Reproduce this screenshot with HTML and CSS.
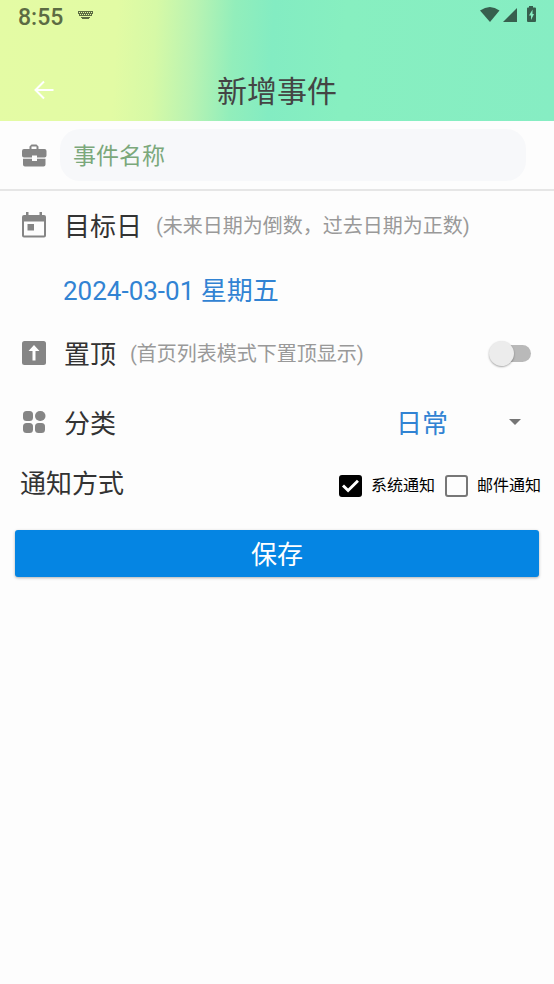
FILE: index.html
```html
<!DOCTYPE html>
<html lang="zh-CN">
<head>
<meta charset="utf-8">
<meta name="viewport" content="width=device-width, initial-scale=1">
<title>新增事件</title>
<link rel="stylesheet" href="styles.css">
</head>
<body>
<header class="header">
  <div class="status">
    <span class="time">8:55</span>
    <svg class="keyboard" width="16" height="9" viewBox="0 0 16 9" fill="currentColor" aria-hidden="true">
      <path d="M0 0h15v1H0zM0 1h1v1H0zM2 1h1v1H2zM4 1h1v1H4zM6 1h1v1H6zM8 1h1v1H8zM10 1h1v1h-1zM12 1h1v1h-1zM14 1h1v1h-1zM0 2h15v1H0zM1 3h1v1H1zM3 3h1v1H3zM5 3h1v1H5zM7 3h1v1H7zM9 3h1v1H9zM11 3h1v1h-1zM13 3h1v1h-1zM1 4h13v1H1zM3 6h9v1H3zM4 7h7v1H4z"/>
    </svg>
    <svg class="signals" width="58" height="18" viewBox="0 0 58 18" fill="currentColor" aria-hidden="true">
      <path d="M0 4.500Q10 -2.500 19.500 4.500L10 16Z"/>
      <path d="M37 2v14H23Z"/>
      <path fill-rule="evenodd" d="M49 0h4v1.500h2a1 1 0 0 1 1 1v12.500a1 1 0 0 1-1 1h-7a1 1 0 0 1-1-1V2.500a1 1 0 0 1 1-1h1ZM52.500 3.500l-3.500 6h2v4.500l3-6h-1.500Z"/>
    </svg>
  </div>
  <div class="toolbar">
    <button class="back" type="button" aria-label="返回">
      <svg width="20" height="20" viewBox="0 0 20 20" fill="none" stroke="#fff" stroke-width="2" aria-hidden="true"><path d="M19.500 10H2M10 1.500L1.500 10l8.500 8.500"/></svg>
    </button>
    <h1 class="title">新增事件</h1>
  </div>
</header>
<form class="form">
  <div class="row name-row">
    <svg class="icon" width="26" height="26" viewBox="0 0 26 26" fill="#858585" aria-hidden="true">
      <path fill-rule="evenodd" d="M8.500 7V4.500L10.500 2.500h5l2 2V7H23.500q2 0 2 2v4.500q0 2-2 2H16v-2h-5v2H3q-2 0-2-2V9q0-2 2-2ZM10.500 7h5V4.500h-5Z"/>
      <path d="M2 16.800h9V19h5v-2.200h8.500V22.500q0 2-2 2H4q-2 0-2-2Z"/>
    </svg>
    <input class="name" type="text" aria-label="事件名称" placeholder="事件名称">
  </div>
  <div class="row target-row">
    <svg class="icon" width="26" height="26" viewBox="0 0 26 26" aria-hidden="true">
      <path fill="#858585" fill-rule="evenodd" d="M5 0h2.500v3h11V0H21v3h2q2 0 2 2v18.500q0 2-2 2H3q-2 0-2-2V5q0-2 2-2h2ZM3 9.500v14h20v-14Z"/>
      <path fill="#858585" d="M6.500 12H13v6.500H6.500z"/>
    </svg>
    <span class="label">目标日</span>
    <span class="hint">(未来日期为倒数，过去日期为正数)</span>
  </div>
  <div class="row date-row">
    <button class="date" type="button">2024-03-01 星期五</button>
  </div>
  <div class="row pin-row">
    <svg class="icon" width="26" height="26" viewBox="0 0 26 26" aria-hidden="true">
      <rect x="1" y="1" width="24" height="24" rx="2.500" fill="#858585"/>
      <path d="M13 5l5.500 6h-4v9.500h-3V11h-4Z" fill="#fff"/>
    </svg>
    <label class="label" for="pin">置顶</label>
    <span class="hint">(首页列表模式下置顶显示)</span>
    <input class="switch" id="pin" type="checkbox" role="switch">
  </div>
  <div class="row category-row">
    <svg class="icon" width="26" height="26" viewBox="0 0 26 26" fill="#858585" aria-hidden="true">
      <rect x="2" y="2" width="10" height="10" rx="3.500"/>
      <rect x="14" y="2" width="10.500" height="10" rx="5"/>
      <rect x="2" y="14" width="10" height="10" rx="3.500"/>
      <rect x="14" y="14" width="10" height="10" rx="3.500"/>
    </svg>
    <label class="label" for="category">分类</label>
    <span class="picker">
      <select class="category" id="category"><option>日常</option></select>
      <svg class="caret" width="12" height="6" viewBox="0 0 12 6" aria-hidden="true"><path d="M0 0h12L6 6Z" fill="#757575"/></svg>
    </span>
  </div>
  <div class="notify" role="group" aria-labelledby="notify-label">
    <span class="label" id="notify-label">通知方式</span>
    <div class="checks">
      <label class="check"><input class="box" type="checkbox" checked>系统通知</label>
      <label class="check"><input class="box" type="checkbox">邮件通知</label>
    </div>
  </div>
  <button class="save" type="submit">保存</button>
</form>
</body>
</html>
```

FILE: styles.css
```css
* { box-sizing: border-box; }

body {
  margin: 0;
  min-height: 100vh;
  background: #fdfdfd;
  color: #333;
  font-family: Roboto, "Noto Sans CJK SC", sans-serif;
}

button, input, select {
  margin: 0;
  border: 0;
  padding: 0;
  background: none;
  color: inherit;
  font: inherit;
}

.header {
  background: linear-gradient(93deg, #e4fba4 0%, #e2fba4 21%, #d6f9a6 28%, #b9f3b2 35%, #92eebb 42%, #83ecc2 49%, #87efc0 62%, #86edc3 100%);
}

.status {
  display: flex;
  align-items: center;
  height: 32px;
  padding: 0 16px 0 18px;
  color: #5c6b43;
}

.time { padding-top: 3px; font-size: 23px; font-weight: 500; line-height: 29px; }
.keyboard { margin: 0 auto 2px 15px; }
.signals { margin-bottom: 2px; color: #375f4e; }

.toolbar {
  display: grid;
  grid-template-columns: 88px 1fr 88px;
  align-items: center;
  padding: 36px 0 9px;
}

.back { display: grid; place-content: center; height: 44px; }
.title {
  margin: 0;
  color: #444;
  font-family: "Noto Sans CJK SC", sans-serif;
  font-size: 30px;
  font-weight: 400;
  line-height: 42px;
  padding-bottom: 2px;
  text-align: center;
}

.row {
  display: flex;
  align-items: center;
  padding: 0 23px 0 21px;
}

.icon { flex: none; }

.name-row {
  gap: 13px;
  height: 70px;
  padding-right: 28px;
  border-bottom: 2px solid #e6e6e6;
}

.name {
  flex: 1;
  min-width: 0;
  height: 52px;
  padding: 0 13px 2px;
  border-radius: 20px;
  background: #f7f8fa;
  font-family: "Noto Sans CJK SC", sans-serif;
  font-size: 23px;
}

.name::placeholder { color: #7ba87b; opacity: 1; }

.target-row { height: 68px; }
.date-row { height: 62px; padding-left: 63px; }
.pin-row { height: 64px; }
.category-row { height: 74px; }

.label {
  font-family: "Noto Sans CJK SC", sans-serif;
  font-size: 26px;
  line-height: 38px;
}

.icon + .label { margin-left: 17px; }
.hint { margin-left: 14px; padding-top: 2px; font-size: 20px; line-height: 28px; color: #999; white-space: nowrap; }
.date { padding-top: 2px; font-size: 26px; line-height: 38px; color: #3183d3; }

.switch {
  appearance: none;
  display: flex;
  align-items: center;
  width: 38px;
  height: 17px;
  margin-left: auto;
  border-radius: 9px;
  background: #b9b9b9;
}

.switch::before {
  content: "";
  width: 25px;
  height: 25px;
  margin-left: -4px;
  border-radius: 50%;
  background: #ececec;
  box-shadow: 0 1px 2px rgba(0, 0, 0, .35);
}

.switch:checked { justify-content: flex-end; background: #8ec5f2; }

.picker {
  display: grid;
  align-items: center;
  width: 135px;
  margin-left: auto;
}

.category, .caret { grid-area: 1 / 1; }
.category {
  appearance: none;
  width: 100%;
  color: #3183d3;
  font-family: "Noto Sans CJK SC", sans-serif;
  font-size: 26px;
  line-height: 38px;
}
.caret { justify-self: end; margin-right: 10px; pointer-events: none; }

.notify {
  display: flex;
  align-items: baseline;
  justify-content: space-between;
  height: 54px;
  padding: 4px 13px 0 20px;
}

.checks { display: flex; gap: 10px; }
.check { display: flex; align-items: center; gap: 9px; font-size: 16px; line-height: 24px; color: #000; }

.box {
  appearance: none;
  display: grid;
  place-content: center;
  width: 23px;
  height: 22px;
  border: 2px solid #777;
  border-radius: 3px;
}

.box:checked { border-color: #000; background: #000; }

.box:checked::before {
  content: "";
  width: 17px;
  height: 14px;
  background: #fff;
  clip-path: polygon(0 53%, 12% 40%, 36% 67%, 88% 6%, 100% 20%, 36% 96%);
}

.save {
  display: block;
  width: calc(100% - 30px);
  height: 47px;
  margin: 17px 15px 0;
  padding-top: 2px;
  border-radius: 3px;
  background: #0585e3;
  box-shadow: 0 1px 3px rgba(0, 0, 0, .3);
  color: #fff;
  font-size: 26px;
  line-height: 38px;
}
```
